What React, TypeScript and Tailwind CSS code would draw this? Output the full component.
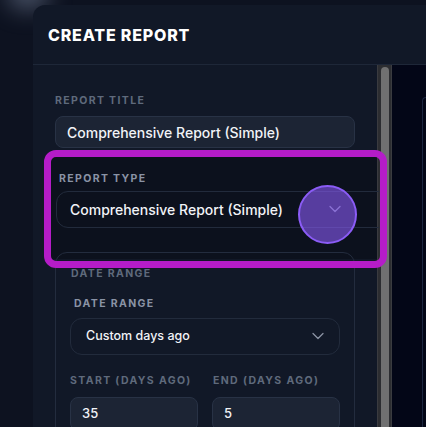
import { ChevronDown } from 'lucide-react';

const label = 'text-[10.5px] leading-[14px] font-bold uppercase tracking-[0.13em]';

function Select({ value, className }: { value: string; className?: string }) {
  return (
    <div className={`relative flex items-center h-[37px] rounded-xl border border-[#222b3c] font-medium text-[#f1f3f7] ${className ?? ''}`}>
      {value}
    </div>
  );
}

export default function App() {
  return (
    <div className="relative w-[426px] h-[427px] overflow-hidden bg-[#0d1220] font-['Inter',sans-serif]">
      {/* blurred glow behind the modal corner */}
      <div className="absolute left-[8px] top-[-22px] w-[40px] h-[30px] rounded-full bg-[#7d8aa3]/60 blur-md" />

      <div className="relative ml-[33px] mt-[5px] h-[422px] rounded-tl-xl bg-[#111827] flex flex-col">
        <div className="h-[60px] shrink-0 flex items-center pl-[15px] border-b border-[#1e2738]">
          <h2 className="text-[16px] font-extrabold tracking-[0.05em] text-white">CREATE REPORT</h2>
        </div>

        <div className="flex flex-1 min-h-0">
          {/* form column */}
          <div className="w-[344px] shrink-0 pl-[22px] pt-[29px]">
            <div className={`${label} text-[#5f6a7c]`}>Report title</div>
            <div className="mt-[8px] w-[300px] h-[32px] flex items-center pl-[11px] rounded-lg bg-[#1c2434] border border-[#283245] text-[14px] font-medium text-[#f1f3f7]">
              Comprehensive Report (Simple)
            </div>

            {/* report type section */}
            <div className="mt-[8px] -ml-[4px] w-[328px] h-[103px] pt-[16px] overflow-hidden bg-[#0c111d]">
              <div className={`${label} ml-[8px] text-[#8a93a5]`}>Report type</div>
              <div className="relative mt-[5px] ml-[5px] w-[340px]">
                <Select value="Comprehensive Report (Simple)" className="pl-[13px] text-[14px]" />
                <ChevronDown size={20} strokeWidth={1.5} className="absolute left-[269px] top-[8px] text-[#8b93a3]" />
              </div>
            </div>

            {/* date range card */}
            <div className="-mt-[7px] w-[300px] h-[200px] rounded-xl border border-[#232c3e] pl-[14px] pt-[14px]">
              <div className={`${label} ml-[1px] text-[#5f6a7c]`}>Date range</div>
              <div className={`${label} mt-[16px] ml-[4px] text-[#8a93a5]`}>Date range</div>
              <div className="relative mt-[7px] w-[270px]">
                <Select value="Custom days ago" className="pl-[15px] text-[12.5px]" />
                <ChevronDown size={20} strokeWidth={1.5} className="absolute right-[12px] top-[8px] text-[#8b93a3]" />
              </div>
              <div className="mt-[19px] grid grid-cols-2 gap-x-[14px] w-[270px]">
                <div className={`${label} text-[#5f6a7c]`}>Start (days ago)</div>
                <div className={`${label} ml-[1px] text-[#5f6a7c]`}>End (days ago)</div>
                <div className="mt-[9px] h-[34px] flex items-center pl-[11px] rounded-lg bg-[#1c2434] border border-[#283245] text-[13px] font-medium text-[#f1f3f7]">35</div>
                <div className="mt-[9px] h-[34px] flex items-center pl-[11px] rounded-lg bg-[#1c2434] border border-[#283245] text-[13px] font-medium text-[#f1f3f7]">5</div>
              </div>
            </div>
          </div>

          {/* scrollbar */}
          <div className="w-[15px] shrink-0 bg-[#2c2d31] border-x border-[#3a3b40] pt-[2px]">
            <div className="ml-[3px] w-[8px] h-[400px] rounded-full bg-[#707071]" />
          </div>

          {/* preview pane */}
          <div className="flex-1 bg-[#030617] pt-[32px] pl-[30px]">
            <div className="h-full rounded-tl-xl border-l border-t border-[#1c2640]" />
          </div>
        </div>
      </div>

      {/* spotlight highlight */}
      <div className="absolute left-[44px] top-[150px] w-[343px] h-[118px] rounded-[12px] border-[7px] border-[#b51cc8]" />
      <div className="absolute left-[298px] top-[185px] w-[59px] h-[59px] rounded-full bg-[#8b5cf6]/60 border-2 border-[#8b5cf6]" />
    </div>
  );
}
